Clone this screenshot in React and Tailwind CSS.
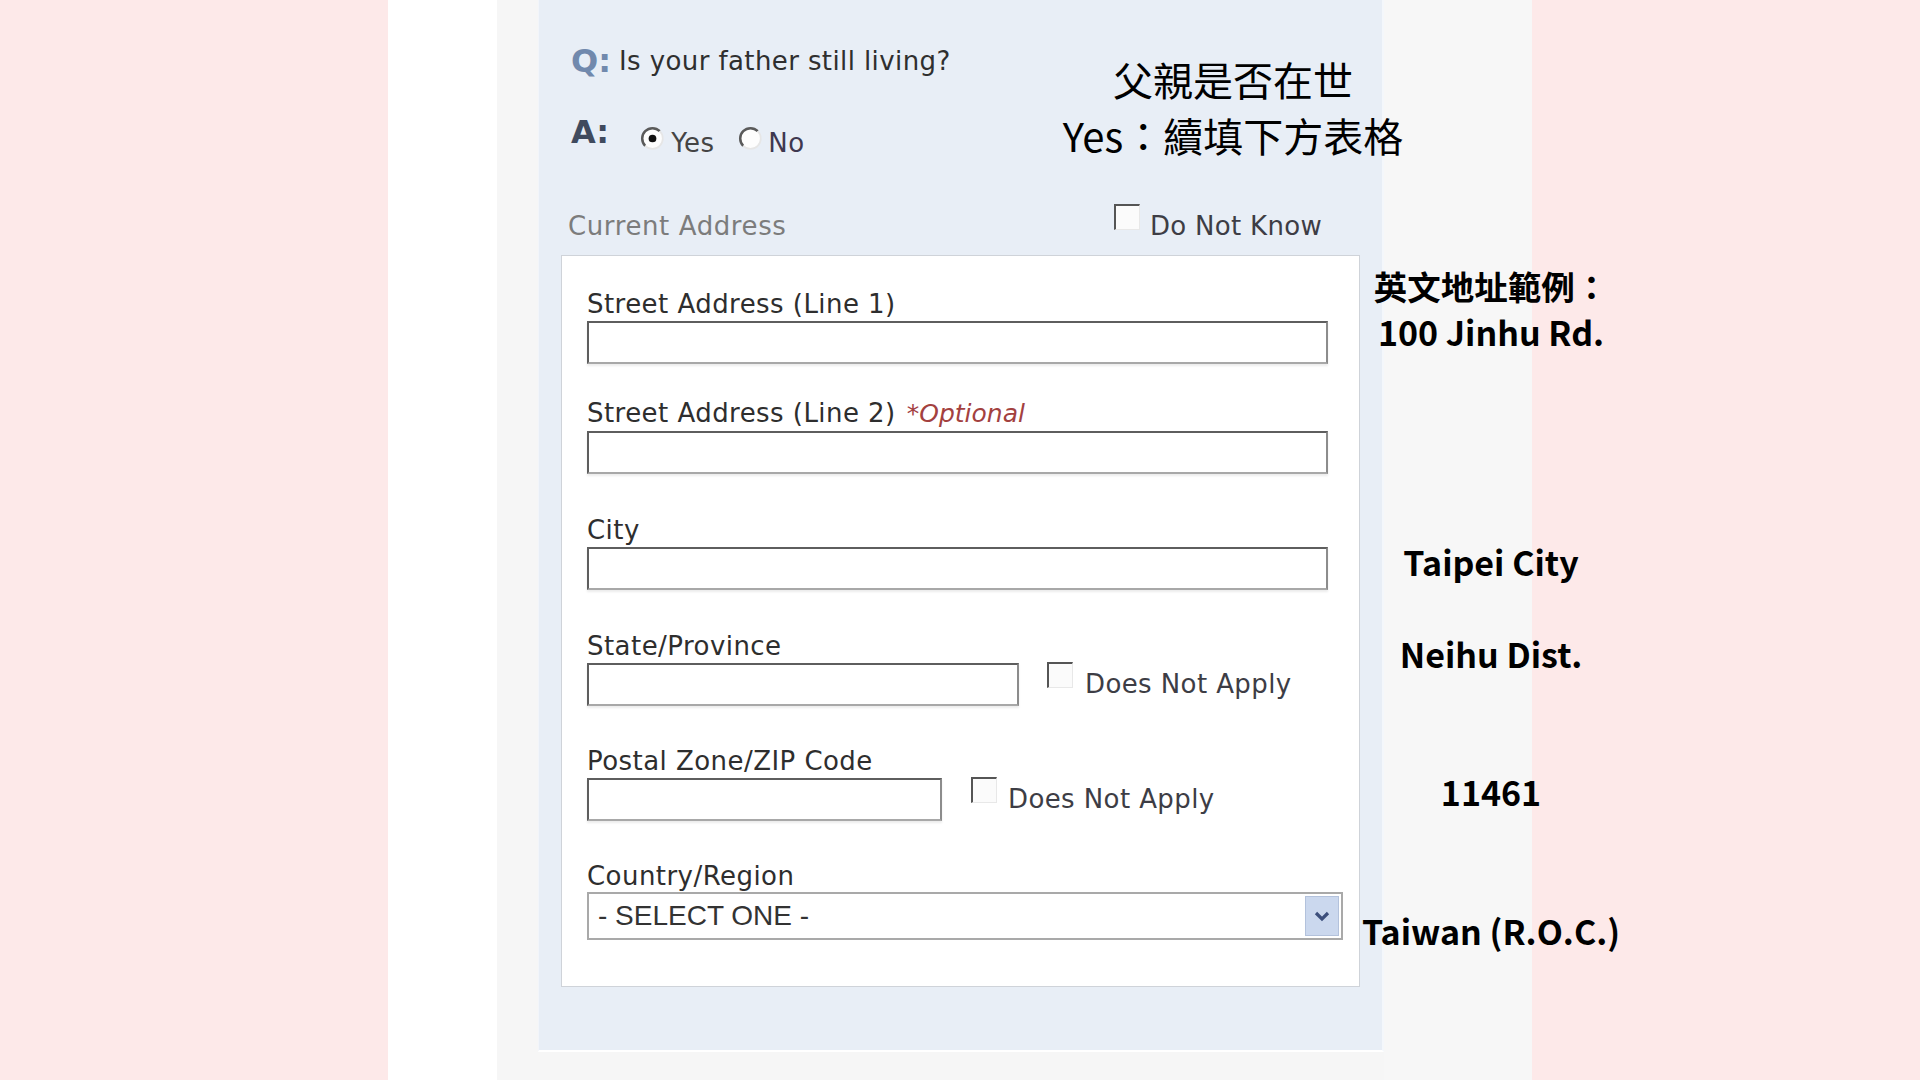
import { useState } from 'react';

const FORM_FONT = { fontFamily: '"DejaVu Sans", Verdana, sans-serif' };

function Checkbox() {
  return (
    <span className="inline-block h-[26px] w-[26px] shrink-0 border-l-2 border-t-2 border-b border-r border-l-[#555] border-t-[#555] border-b-[#e8e8e8] border-r-[#e8e8e8] bg-[#fbfbfb]" />
  );
}

function Radio({ checked }) {
  return (
    <svg width="25" height="25" viewBox="0 0 22 22" className="shrink-0">
      <circle cx="11" cy="11" r="9" fill="#fdfdfd" />
      <path d="M4.6 17.4 A9 9 0 0 1 17.4 4.6" fill="none" stroke="#5a5a5a" strokeWidth="2.2" />
      <path d="M17.4 4.6 A9 9 0 0 1 4.6 17.4" fill="none" stroke="#e6e6e6" strokeWidth="1.5" />
      {checked && <circle cx="11" cy="11" r="3.4" fill="#111" />}
    </svg>
  );
}

function TextBox({ width }) {
  return (
    <input
      type="text"
      className={`${width} h-[43px] border-2 border-[#5e5e5e] border-b-[#a8a8a8] border-r-[#8c8c8c] bg-white px-2 outline-none shadow-[0_2px_2px_rgba(0,0,0,0.08)]`}
    />
  );
}

function Field({ label, optional, top, children }) {
  return (
    <div className={top}>
      <div className="flex h-[30px] items-center text-[26px] leading-none tracking-[0.45px] text-[#2e2e2e]">
        {label}
        {optional && <span className="ml-[11px] text-[25px] italic tracking-normal text-[#a3413f]">*Optional</span>}
      </div>
      {children}
    </div>
  );
}

export default function App() {
  const [living, setLiving] = useState('yes');

  return (
    <div className="relative flex h-[1080px] w-[1920px] overflow-hidden bg-[#fde9e9]">
      <div className="w-[388px] shrink-0 bg-[#fde9e9]" />
      <div className="w-[109px] shrink-0 bg-white" />
      <div className="w-[41px] shrink-0 bg-[#f6f6f6]" />

      <div className="flex w-[846px] shrink-0 flex-col bg-[#f6f6f6]">
        <section
          className="flex h-[1052px] flex-col border-b-2 border-l border-r-2 border-b-white border-l-[#f2f5fa] border-r-[#f4f7fb] bg-[#e8eef6] pl-[32px]"
          style={FORM_FONT}
        >
          <div className="mt-[41px] flex h-[40px] items-center gap-[8px]">
            <span className="text-[32px] font-bold text-[#7189ad]">Q:</span>
            <span className="text-[26px] tracking-[0.4px] text-[#2f2f2f]">Is your father still living?</span>
          </div>

          <div className="mt-[37px] flex h-[40px] items-center">
            <span className="mb-[12px] text-[32px] font-bold text-[#3f4a5e]">A:</span>
            <label className="ml-[31px] flex items-center gap-[6px]" onClick={() => setLiving('yes')}>
              <Radio checked={living === 'yes'} />
              <span className="mt-[10px] text-[26px] tracking-[0.4px] text-[#444]">Yes</span>
            </label>
            <label className="ml-[24px] flex items-center gap-[5px]" onClick={() => setLiving('no')}>
              <Radio checked={living === 'no'} />
              <span className="mt-[10px] text-[26px] tracking-[0.4px] text-[#3e3850]">No</span>
            </label>
          </div>

          <div className="mt-[48px] flex h-[40px] items-center pr-[60px]">
            <span className="-ml-[3px] text-[26px] tracking-[0.6px] text-[#7c7c7c]">Current Address</span>
            <label className="ml-auto flex items-center gap-[10px]">
              <span className="-mt-[12px]">
                <Checkbox />
              </span>
              <span className="text-[26px] tracking-[0.3px] text-[#3d3d45]">Do Not Know</span>
            </label>
          </div>

          <div className="ml-[-10px] mt-[9px] w-[799px] border border-[#cfd3d9] bg-white pb-[46px] pl-[25px] pt-[33px]">
            <Field label="Street Address (Line 1)" top="">
              <div className="mt-[2px]">
                <TextBox width="w-[741px]" />
              </div>
            </Field>

            <Field label="Street Address (Line 2)" optional top="mt-[34px]">
              <div className="mt-[3px]">
                <TextBox width="w-[741px]" />
              </div>
            </Field>

            <Field label="City" top="mt-[41px]">
              <div className="mt-[2px]">
                <TextBox width="w-[741px]" />
              </div>
            </Field>

            <Field label="State/Province" top="mt-[41px]">
              <div className="mt-[2px] flex items-center">
                <TextBox width="w-[432px]" />
                <label className="ml-[28px] flex items-center gap-[12px]">
                  <span className="-mt-[12px]">
                    <Checkbox />
                  </span>
                  <span className="text-[26px] tracking-[0.4px] text-[#3d3d45]">Does Not Apply</span>
                </label>
              </div>
            </Field>

            <Field label="Postal Zone/ZIP Code" top="mt-[40px]">
              <div className="mt-[2px] flex items-center">
                <TextBox width="w-[355px]" />
                <label className="ml-[29px] flex items-center gap-[11px]">
                  <span className="-mt-[12px]">
                    <Checkbox />
                  </span>
                  <span className="text-[26px] tracking-[0.4px] text-[#3d3d45]">Does Not Apply</span>
                </label>
              </div>
            </Field>

            <Field label="Country/Region" top="mt-[40px]">
              <div className="mt-[1px] flex h-[48px] w-[756px] items-center border-2 border-[#a9a9a9] bg-white pl-[9px] pr-[2px]">
                <span className="text-[28px] text-[#333]" style={{ fontFamily: '"Liberation Sans", Arial, sans-serif' }}>
                  - SELECT ONE -
                </span>
                <span className="ml-auto flex h-[40px] w-[34px] items-center justify-center border border-[#b3c2dc] bg-[#cbd8ee]">
                  <svg width="18" height="12" viewBox="0 0 18 12">
                    <path d="M3 3 L9 9 L15 3" fill="none" stroke="#3d4f7c" strokeWidth="3.2" />
                  </svg>
                </span>
              </div>
            </Field>
          </div>
        </section>
      </div>

      <div className="w-[148px] shrink-0 bg-[#f7f7f7]" />
      <div className="flex-1 bg-[#fde9e9]" />

      <div
        className="absolute left-[1233px] top-[51px] -translate-x-1/2 whitespace-nowrap text-center text-[40px] leading-[56px] text-black"
        style={{ fontFamily: '"Noto Sans CJK TC", "Noto Sans", sans-serif' }}
      >
        <div>父親是否在世</div>
        <div>Yes：續填下方表格</div>
      </div>

      <div
        className="absolute left-[1491px] top-[263px] -translate-x-1/2 whitespace-nowrap text-center font-bold leading-[46px] text-black"
        style={{ fontFamily: '"Noto Sans CJK TC", "Noto Sans", sans-serif' }}
      >
        <div className="text-[33.5px]">英文地址範例：</div>
        <div className="text-[34px]">100 Jinhu Rd.</div>
      </div>

      {[
        { text: 'Taipei City', top: 'top-[539px]' },
        { text: 'Neihu Dist.', top: 'top-[631px]' },
        { text: '11461', top: 'top-[769px]' },
        { text: 'Taiwan (R.O.C.)', top: 'top-[908px]' },
      ].map((note) => (
        <div
          key={note.text}
          className={`absolute left-[1491px] ${note.top} -translate-x-1/2 whitespace-nowrap text-[34px] font-bold leading-[46px] text-black`}
          style={{ fontFamily: '"Noto Sans CJK TC", "Noto Sans", sans-serif' }}
        >
          {note.text}
        </div>
      ))}
    </div>
  );
}
